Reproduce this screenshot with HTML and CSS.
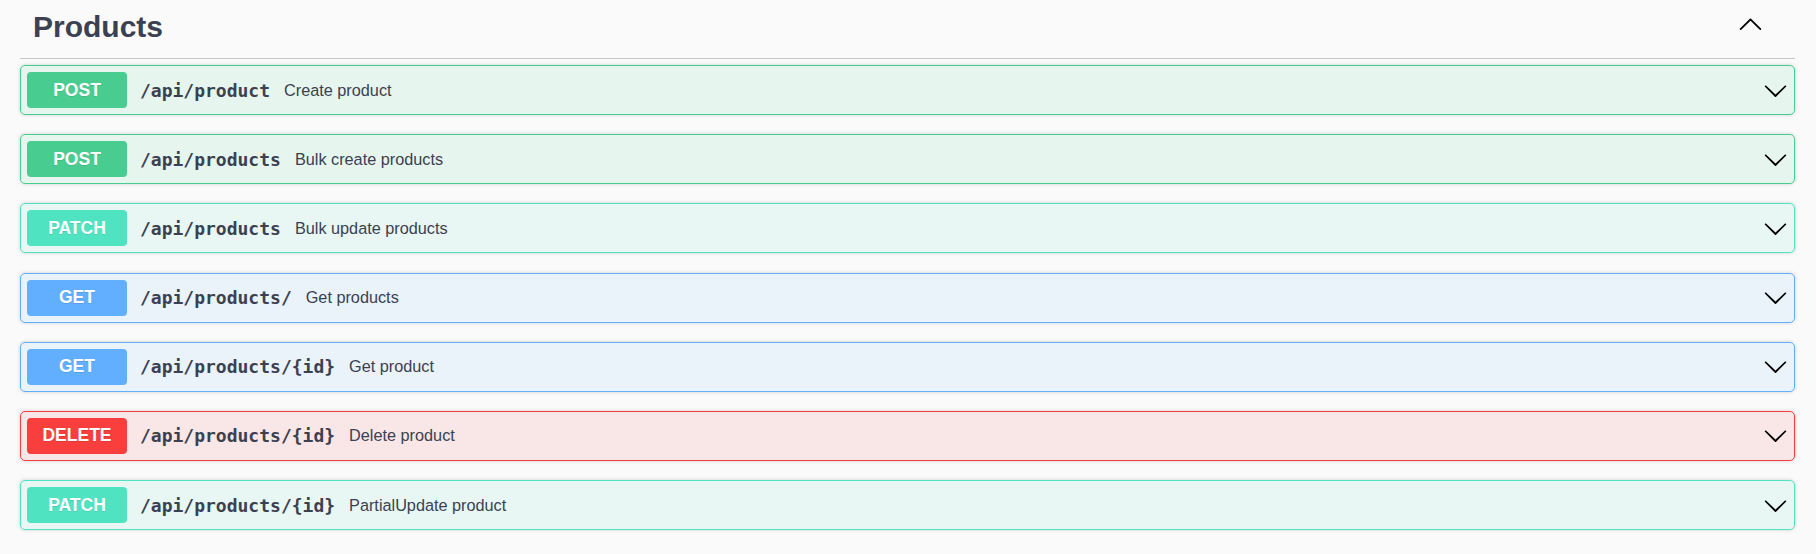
FILE: index.html
```html
<!DOCTYPE html>
<html lang="en">
<head>
<meta charset="utf-8">
<title>Products</title>
<link rel="stylesheet" href="styles.css">
</head>
<body>
<div class="section">
  <div class="tag">
    <h3 class="tag-title">Products</h3>
    <button class="tag-toggle" type="button" aria-label="Collapse">
      <svg width="25" height="25" viewBox="0 0 20 20"><path d="M17.418 14.908c.272.268.709.268.979 0s.271-.701 0-.969l-7.908-7.83c-.27-.268-.707-.268-.979 0l-7.908 7.83c-.27.268-.27.701 0 .969.271.268.709.268.979 0L10 7.767l7.418 7.141z"/></svg>
    </button>
  </div>

  <div class="op op-post">
    <span class="method">POST</span>
    <span class="path">/api/product</span>
    <span class="desc">Create product</span>
    <svg class="chev" width="25" height="25" viewBox="0 0 20 20"><path d="M17.418 6.109c.272-.268.709-.268.979 0s.271.701 0 .969l-7.908 7.83c-.27.268-.707.268-.979 0l-7.908-7.83c-.27-.268-.27-.701 0-.969.271-.268.709-.268.979 0L10 13.25l7.418-7.141z"/></svg>
  </div>

  <div class="op op-post">
    <span class="method">POST</span>
    <span class="path">/api/products</span>
    <span class="desc">Bulk create products</span>
    <svg class="chev" width="25" height="25" viewBox="0 0 20 20"><path d="M17.418 6.109c.272-.268.709-.268.979 0s.271.701 0 .969l-7.908 7.83c-.27.268-.707.268-.979 0l-7.908-7.83c-.27-.268-.27-.701 0-.969.271-.268.709-.268.979 0L10 13.25l7.418-7.141z"/></svg>
  </div>

  <div class="op op-patch">
    <span class="method">PATCH</span>
    <span class="path">/api/products</span>
    <span class="desc">Bulk update products</span>
    <svg class="chev" width="25" height="25" viewBox="0 0 20 20"><path d="M17.418 6.109c.272-.268.709-.268.979 0s.271.701 0 .969l-7.908 7.83c-.27.268-.707.268-.979 0l-7.908-7.83c-.27-.268-.27-.701 0-.969.271-.268.709-.268.979 0L10 13.25l7.418-7.141z"/></svg>
  </div>

  <div class="op op-get">
    <span class="method">GET</span>
    <span class="path">/api/products/</span>
    <span class="desc">Get products</span>
    <svg class="chev" width="25" height="25" viewBox="0 0 20 20"><path d="M17.418 6.109c.272-.268.709-.268.979 0s.271.701 0 .969l-7.908 7.83c-.27.268-.707.268-.979 0l-7.908-7.83c-.27-.268-.27-.701 0-.969.271-.268.709-.268.979 0L10 13.25l7.418-7.141z"/></svg>
  </div>

  <div class="op op-get">
    <span class="method">GET</span>
    <span class="path">/api/products/{id}</span>
    <span class="desc">Get product</span>
    <svg class="chev" width="25" height="25" viewBox="0 0 20 20"><path d="M17.418 6.109c.272-.268.709-.268.979 0s.271.701 0 .969l-7.908 7.83c-.27.268-.707.268-.979 0l-7.908-7.83c-.27-.268-.27-.701 0-.969.271-.268.709-.268.979 0L10 13.25l7.418-7.141z"/></svg>
  </div>

  <div class="op op-delete">
    <span class="method">DELETE</span>
    <span class="path">/api/products/{id}</span>
    <span class="desc">Delete product</span>
    <svg class="chev" width="25" height="25" viewBox="0 0 20 20"><path d="M17.418 6.109c.272-.268.709-.268.979 0s.271.701 0 .969l-7.908 7.83c-.27.268-.707.268-.979 0l-7.908-7.83c-.27-.268-.27-.701 0-.969.271-.268.709-.268.979 0L10 13.25l7.418-7.141z"/></svg>
  </div>

  <div class="op op-patch">
    <span class="method">PATCH</span>
    <span class="path">/api/products/{id}</span>
    <span class="desc">PartialUpdate product</span>
    <svg class="chev" width="25" height="25" viewBox="0 0 20 20"><path d="M17.418 6.109c.272-.268.709-.268.979 0s.271.701 0 .969l-7.908 7.83c-.27.268-.707.268-.979 0l-7.908-7.83c-.27-.268-.27-.701 0-.969.271-.268.709-.268.979 0L10 13.25l7.418-7.141z"/></svg>
  </div>
</div>
</body>
</html>
```

FILE: styles.css
```css
html, body {
  margin: 0;
  padding: 0;
  background: #fafafa;
}

body {
  font-family: "Liberation Sans", Arial, sans-serif;
  color: #3b4151;
}

.section {
  padding: 0 21px 0 20px;
}

.tag {
  display: flex;
  align-items: flex-start;
  padding: 10px 32px 14px 13px;
  border-bottom: 1px solid #c4c6cb;
  margin-bottom: 6px;
}

.tag-title {
  flex: 1 1 auto;
  margin: 0;
  font-size: 30px;
  line-height: 34px;
  font-weight: 700;
  color: #3b4151;
}

.tag-toggle {
  border: 0;
  background: none;
  padding: 0;
  margin-top: 1px;
  width: 25px;
  height: 25px;
  display: block;
}

.tag-toggle svg {
  display: block;
  fill: #000;
}

.op {
  display: flex;
  align-items: center;
  height: 50px;
  box-sizing: border-box;
  padding: 6px;
  border: 1px solid;
  border-radius: 5px;
  box-shadow: 0 0 3.75px rgba(0, 0, 0, 0.19);
  margin-bottom: 19.2px;
}

.method {
  flex: 0 0 100px;
  height: 36px;
  display: flex;
  align-items: center;
  justify-content: center;
  border-radius: 4px;
  color: #fff;
  font-weight: 700;
  font-size: 17.5px;
  text-shadow: 0 1px 0 rgba(0, 0, 0, 0.1);
}

.path {
  padding: 0 14px 0 13px;
  font-family: "DejaVu Sans Mono", monospace;
  font-weight: 700;
  font-size: 18px;
  color: #3b4151;
  white-space: nowrap;
}

.desc {
  flex: 1 1 auto;
  font-size: 16.25px;
  color: #3b4151;
}

.chev {
  flex: 0 0 25px;
  display: block;
  fill: #000;
}

.op-post {
  background: rgba(73, 204, 144, 0.1);
  border-color: #49cc90;
}
.op-post .method { background: #49cc90; }

.op-patch {
  background: rgba(80, 227, 194, 0.1);
  border-color: #50e3c2;
}
.op-patch .method { background: #50e3c2; }

.op-get {
  background: rgba(97, 175, 254, 0.1);
  border-color: #61affe;
}
.op-get .method { background: #61affe; }

.op-delete {
  background: rgba(249, 62, 62, 0.1);
  border-color: #f93e3e;
}
.op-delete .method { background: #f93e3e; }
```
